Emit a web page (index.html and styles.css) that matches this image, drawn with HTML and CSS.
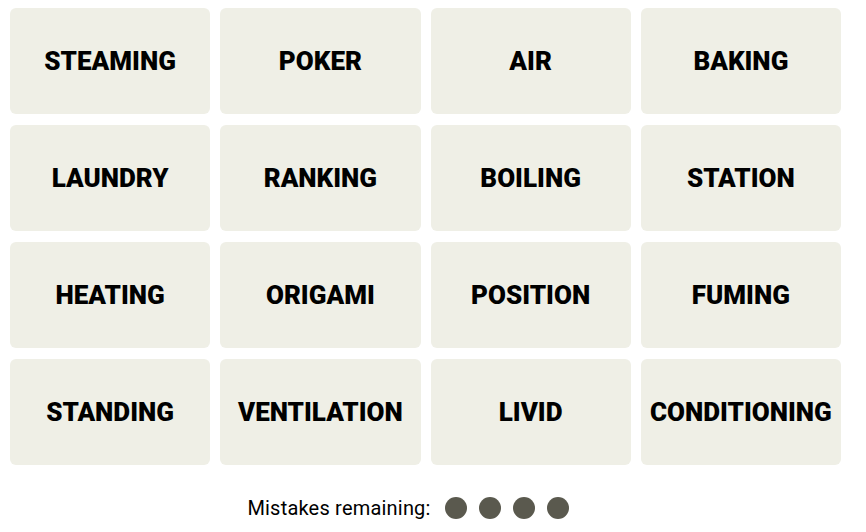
FILE: index.html
```html
<!doctype html>
<html lang="en">
  <head>
    <meta charset="UTF-8" />
    <title>Connections</title>
    <link rel="stylesheet" href="styles.css">
  </head>
  <body>
    <div class="board">
      <div class="tile">STEAMING</div>
      <div class="tile">POKER</div>
      <div class="tile">AIR</div>
      <div class="tile">BAKING</div>
      <div class="tile">LAUNDRY</div>
      <div class="tile">RANKING</div>
      <div class="tile">BOILING</div>
      <div class="tile">STATION</div>
      <div class="tile">HEATING</div>
      <div class="tile">ORIGAMI</div>
      <div class="tile">POSITION</div>
      <div class="tile">FUMING</div>
      <div class="tile">STANDING</div>
      <div class="tile">VENTILATION</div>
      <div class="tile">LIVID</div>
      <div class="tile">CONDITIONING</div>
    </div>
    <div class="mistakes">
      <span class="label">Mistakes remaining:</span>
      <span class="dots">
        <span class="dot"></span>
        <span class="dot"></span>
        <span class="dot"></span>
        <span class="dot"></span>
      </span>
    </div>
  </body>
</html>
```

FILE: styles.css
```css
body {
  margin: 0;
  padding: 8px 25px 0 10px;
  background: #fff;
  font-family: Roboto, "Liberation Sans", sans-serif;
  color: #000;
}
.board {
  display: grid;
  grid-template-columns: repeat(4, 1fr);
  grid-auto-rows: 106px;
  column-gap: 10px;
  row-gap: 11px;
}
.tile {
  display: flex;
  align-items: center;
  justify-content: center;
  background: #efefe6;
  border-radius: 6px;
  font-size: 26px;
  font-weight: 900;
  text-transform: uppercase;
}
.mistakes {
  display: flex;
  align-items: center;
  justify-content: center;
  margin-top: 31px;
  padding-right: 35px;
  font-size: 20px;
}
.label {
  margin-right: 14px;
  letter-spacing: 0.2px;
}
.dots {
  display: flex;
  gap: 12px;
}
.dot {
  width: 22px;
  height: 22px;
  border-radius: 50%;
  background: #5a594e;
}
```
